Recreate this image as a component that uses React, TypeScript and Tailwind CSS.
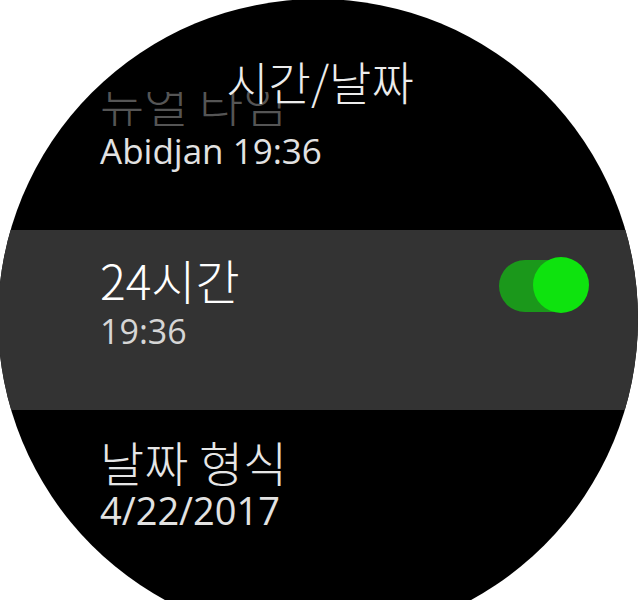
import React from "react";

const kr = "font-['Noto_Sans_CJK_KR',sans-serif] font-light";
const num = "font-['Open_Sans','Noto_Sans_CJK_KR',sans-serif]";

function Toggle() {
  return (
    <div className="relative h-[56px] w-[90px]">
      <div className="absolute left-0 top-[3px] h-[52px] w-[80px] rounded-full bg-[#1b981b]" />
      <div className="absolute right-0 top-0 h-[56px] w-[56px] rounded-full bg-[#0ee30e]" />
    </div>
  );
}

export default function App() {
  return (
    <div className="h-[600px] w-[640px] overflow-hidden bg-white">
      <div className="relative -ml-[2px] -mt-px h-[640px] w-[640px] overflow-hidden rounded-full bg-black">
        {/* previous item, scrolled under the title */}
        <div className="h-[231px] pl-[102px] pt-[93px]">
          <div className="h-[34px] overflow-hidden">
            <p className={`${kr} -mt-[18px] text-[48px] leading-[56px] text-[#555555]`}>듀얼 타임</p>
          </div>
          <p className={`${num} mt-[5px] text-[35px] leading-[40px] text-[#e2e2e2]`}>Abidjan 19:36</p>
        </div>

        <div className="flex h-[180px] items-start justify-between bg-[#333333] pl-[102px] pr-[49px]">
          <div className="pt-[21px]">
            <p className={`${kr} text-[48px] leading-[56px] text-white`}>24시간</p>
            <p className={`${num} mt-[4px] text-[34px] leading-[40px] text-[#d6d6d6]`}>19:36</p>
          </div>
          <div className="mt-[27px]">
            <Toggle />
          </div>
        </div>

        <div className="pl-[102px] pt-[23px]">
          <p className={`${kr} text-[48px] leading-[56px] text-[#e6e6e6]`}>날짜 형식</p>
          <p className={`${num} mt-[1px] text-[38px] leading-[40px] text-[#e2e2e2]`}>4/22/2017</p>
        </div>

        <p className={`${kr} absolute inset-x-0 top-[55px] pl-[4px] text-center text-[46px] leading-[52px] text-[#ececec]`}>
          시간/날짜
        </p>
      </div>
    </div>
  );
}
